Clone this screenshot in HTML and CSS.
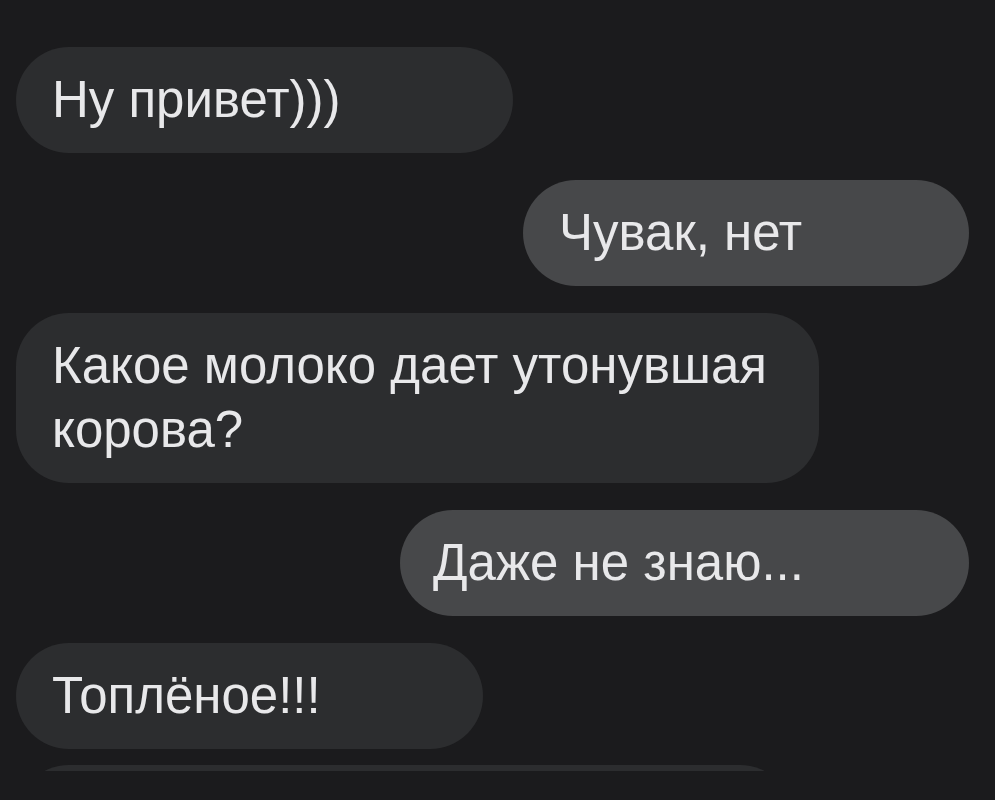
FILE: index.html
```html
<!DOCTYPE html>
<html lang="ru">
<head>
  <meta charset="UTF-8">
  <title>Чат</title>
  <meta name="viewport" content="width=device-width, initial-scale=1.0">
  <link rel="stylesheet" href="styles.css">
</head>
<body>
  <div class="chat">
    <div class="msg in w-privet">Ну привет)))</div>
    <div class="msg out w-chuvak">Чувак, нет</div>
    <div class="msg in w-moloko">Какое молоко дает утонувшая корова?</div>
    <div class="msg out w-znayu">Даже не знаю...</div>
    <div class="msg in w-toplenoe">Топлёное!!!</div>
    <div class="msg in w-next">&nbsp;</div>
  </div>
</body>
</html>
```

FILE: styles.css
```css
body {
  margin: 0;
  padding: 0;
  background-color: #1b1b1d;
  font-family: 'Liberation Sans', Arial, sans-serif;
  color: #e8e8ea;
}

.chat {
  height: 771px;
  overflow: hidden;
  padding: 47px 26px 0 16px;
  box-sizing: border-box;
  display: flex;
  flex-direction: column;
}

.msg {
  box-sizing: border-box;
  padding: 21px 36px;
  border-radius: 53px;
  font-size: 51px;
  line-height: 64px;
  flex-shrink: 0;
}

.msg + .msg {
  margin-top: 27px;
}

.msg.in + .msg.in {
  margin-top: 16px;
}

.in {
  align-self: flex-start;
  background-color: #2c2d2f;
}

.out {
  align-self: flex-end;
  background-color: #47484a;
}

.w-privet { width: 497px; }
.w-chuvak { width: 446px; }
.w-moloko { width: 803px; }
.w-znayu { width: 569px; padding-left: 33px; }
.w-toplenoe { width: 467px; }
.w-next { width: 777px; }
```
